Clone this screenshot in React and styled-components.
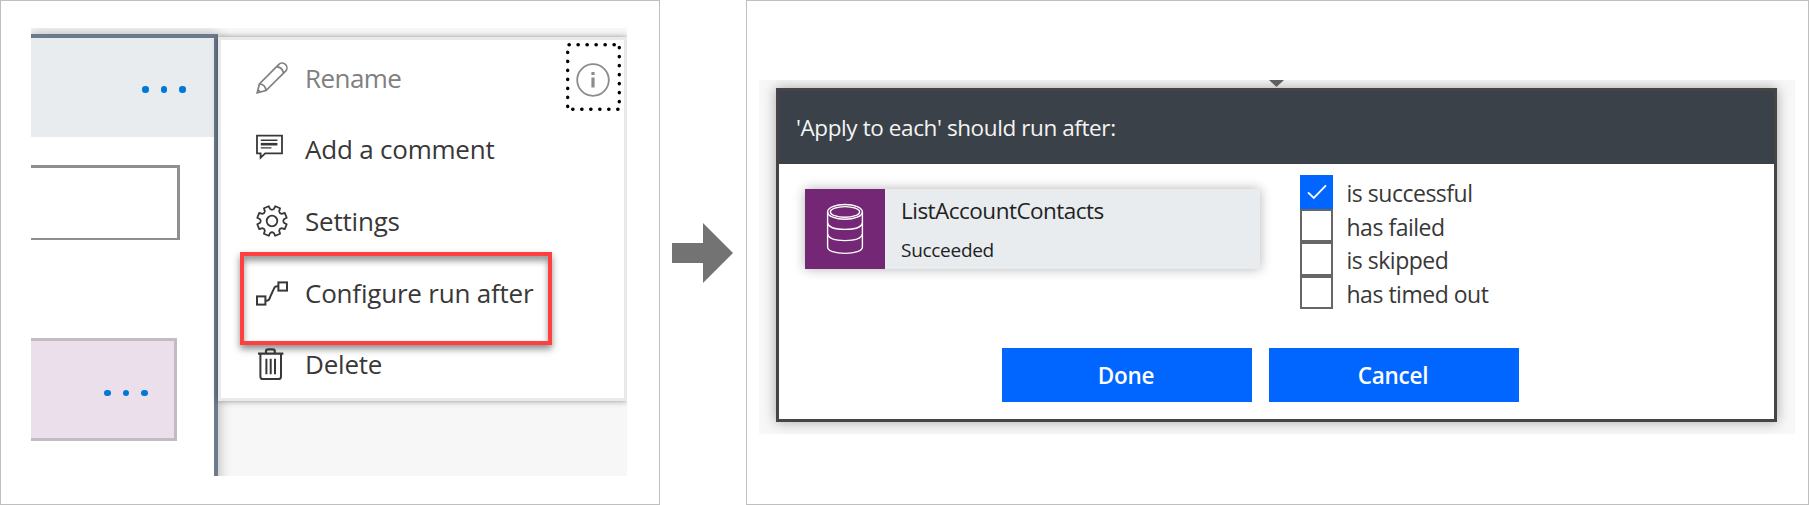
import React from "react";
import styled, { createGlobalStyle } from "styled-components";

const GlobalStyle = createGlobalStyle`
  * { box-sizing: border-box; }
  body { margin: 0; background: #fff; }
`;

const Page = styled.main`
  display: flex;
  align-items: center;
  width: 1809px;
  height: 505px;
  overflow: hidden;
  font-family: "Open Sans", "Noto Sans", sans-serif;
  letter-spacing: -0.018em;
  color: #383838;
  white-space: nowrap;
`;

const Frame = styled.section`
  width: ${(p) => p.$width}px;
  height: 505px;
  padding: ${(p) => p.$padding};
  border: 1px solid #bfbfbf;
`;

/* ---------- left: designer with the action menu ---------- */

const Designer = styled.div`
  display: flex;
  align-items: flex-start;
  width: 596px;
  height: 448px;
  overflow: hidden;
  background: #f7f7f7;
`;

const ScopeCard = styled.div`
  flex: none;
  width: 187px;
  height: 460px;
  margin-top: 6px;
  border: solid #6b7b8d;
  border-width: 4px 4px 0 0;
  background: #fff;
  box-shadow: 0 0 12px rgba(0, 0, 0, 0.3);
`;

const ScopeHeader = styled.div`
  display: flex;
  align-items: center;
  justify-content: flex-end;
  height: 99px;
  padding: 4px 28.5px 0 0;
  background: #e8ecef;
`;

const Dots = styled.div`
  display: flex;
  gap: 12px;
`;

const Dot = styled.i`
  width: 6.5px;
  height: 6.5px;
  border-radius: 50%;
  background: #0078d7;
`;

const InputBox = styled.div`
  width: 149px;
  height: 75px;
  margin-top: 28px;
  border: solid #8f8f8f;
  border-width: 3px 3px 2px 0;
`;

const NestedCard = styled.div`
  display: flex;
  align-items: center;
  justify-content: flex-end;
  width: 146px;
  height: 103px;
  margin-top: 98px;
  padding: 7px 26.5px 0 0;
  border: solid #c2bcc2;
  border-width: 3px 3px 3px 0;
  background: #ebdfeb;
`;

const Menu = styled.ul`
  position: relative;
  width: 409px;
  height: 364px;
  margin: 9px 0 0;
  padding: 1.8px 0 0 35px;
  list-style: none;
  border: 3px solid #e9e9e9;
  background: #fff;
  box-shadow: 0 0 6px rgba(0, 0, 0, 0.42);
`;

const MenuItem = styled.li`
  position: relative;
  display: flex;
  align-items: center;
  gap: 17px;
  height: 71.7px;
  font-size: 26px;
  letter-spacing: ${(p) => (p.$disabled ? "-0.022em" : "-0.008em")};
  color: ${(p) => (p.$disabled ? "#808080" : "#383838")};

  svg {
    flex: none;
    display: block;
    overflow: visible;
  }
`;

const Highlight = styled.span`
  position: absolute;
  left: -16px;
  top: -5px;
  width: 312px;
  height: 93px;
  border: 4px solid #ff4040;
  box-shadow: 0 4px 7px rgba(0, 0, 0, 0.45), inset 0 5px 6px rgba(0, 0, 0, 0.4);
`;

const InfoFocus = styled.span`
  position: absolute;
  right: 3px;
  top: 3px;
  display: flex;
  align-items: center;
  justify-content: center;
  width: 55px;
  height: 68px;
  padding: 6px 2px 0 0;
`;

const FocusRing = styled.svg`
  position: absolute;
  inset: 0;
`;

/* ---------- middle ---------- */

const Arrow = styled.svg`
  flex: none;
  margin: 0 13px 0 12px;
`;

/* ---------- right: run-after dialog ---------- */

const Stage = styled.div`
  width: 1036px;
  height: 354px;
  padding: 7.5px 0 0 17px;
  overflow: hidden;
  position: relative;
  background: #f7f7f7;
`;

const Pointer = styled.svg`
  position: absolute;
  left: 510px;
  top: 0;
`;

const Dialog = styled.div`
  width: 1001px;
  height: 334px;
  border: 3px solid #454545;
  background: #fff;
  box-shadow: 0 0 12px rgba(0, 0, 0, 0.33);
`;

const DialogTitle = styled.header`
  height: 73.5px;
  padding-left: 17px;
  line-height: 74px;
  font-size: 22.5px;
  letter-spacing: -0.018em;
  color: #f4f4f4;
  background: #3b4148;
`;

const DialogBody = styled.div`
  display: flex;
  align-items: flex-start;
  height: 184px;
  padding: 11px 0 0 26px;
`;

const ActionCard = styled.div`
  display: flex;
  width: 455px;
  height: 80px;
  margin-top: 13.5px;
  background: #e8ecef;
  box-shadow: 0 0 11px rgba(0, 0, 0, 0.3);
`;

const ActionIcon = styled.div`
  width: 80px;
  height: 80px;
  background: #742774;
`;

const ActionText = styled.div`
  display: flex;
  flex-direction: column;
  padding: 7px 0 0 16px;
  color: #222;
`;

const ActionName = styled.strong`
  font-weight: 400;
  font-size: 22.5px;
  line-height: 30px;
  letter-spacing: -0.023em;
`;

const ActionState = styled.span`
  margin-top: 10px;
  font-size: 19px;
  line-height: 28px;
`;

const Options = styled.div`
  margin-left: 40px;
`;

const Option = styled.label`
  display: flex;
  align-items: center;
  gap: 13.5px;
  height: 33.5px;
  font-size: 23px;
  letter-spacing: -0.021em;
`;

const OptionText = styled.span`
  padding-top: 2.5px;
`;

const Check = styled.span`
  display: flex;
  align-items: center;
  justify-content: center;
  width: 33px;
  height: 33.5px;
  border: 2px solid ${(p) => (p.$on ? "#0066ff" : "#666")};
  background: ${(p) => (p.$on ? "#0066ff" : "#fff")};
`;

const Actions = styled.footer`
  display: flex;
  gap: 17px;
  padding-left: 222.5px;
`;

const Button = styled.button`
  width: 250px;
  height: 53.5px;
  padding: 0.5px 1px 0 0;
  border: 0;
  font: 600 22.5px "Open Sans", "Noto Sans", sans-serif;
  letter-spacing: -0.012em;
  color: #fff;
  background: #0066ff;
`;

/* ---------- icons ---------- */

const Icon = ({ children, width = 1.8 }) => (
  <svg width="32" height="32" viewBox="0 0 32 32" fill="none" stroke="currentColor" strokeWidth={width}>
    {children}
  </svg>
);

const PencilIcon = () => (
  <Icon width={1.7}>
    <path d="M1.2 30.8 3.4 22 22.6 2.6A4.7 4.7 0 0 1 29.6 9.2L10 28.6Z" />
    <path d="M3.4 22C7 22.2 9.6 24.8 10 28.6M20.8 4.6C24.4 5.2 27 7.8 27.6 11.2M1.6 27.6 4.4 30.2" />
  </Icon>
);

const CommentIcon = () => (
  <Icon>
    <path d="M1 2.6H26V20.4H9.2L4.6 24.6V20.4H1Z" />
    <path d="M4.8 7.2H21.4M4.8 14.9H15.4" strokeWidth="1.4" />
    <path d="M4.8 11.2H21.4" strokeWidth="2.6" />
  </Icon>
);

const point = (radius, degrees) => {
  const a = (degrees * Math.PI) / 180;
  return `${(16 + radius * Math.sin(a)).toFixed(2)} ${(16 - radius * Math.cos(a)).toFixed(2)}`;
};

const gearOutline =
  Array.from({ length: 8 }, (_, i) => {
    const c = 22.5 + i * 45;
    return `${i ? "L" : "M"}${point(12, c - 14)} L${point(15.1, c - 10)} L${point(15.1, c + 10)} L${point(12, c + 14)} Q${point(10.6, c + 22.5)} ${point(12, c + 31)}`;
  }).join(" ") + "Z";

const GearIcon = () => (
  <Icon>
    <path d={gearOutline} strokeLinejoin="round" />
    <circle cx="16" cy="16" r="5.3" />
  </Icon>
);

const RunAfterIcon = () => (
  <Icon width={2}>
    <rect x="1" y="19.4" width="8.4" height="8.2" />
    <rect x="22.4" y="5.4" width="8.6" height="8.2" />
    <path d="M9.8 23.8C13 24 13.2 22.4 14.4 19.4L17.6 12.4C18.8 9.6 19.2 9 22 9.2" />
  </Icon>
);

const TrashIcon = () => (
  <Icon width={2}>
    <path d="M2 5.6H27.4M10 5V3.4Q10 1.4 12 1.4H16.8Q18.8 1.4 18.8 3.4V5" strokeWidth="2.2" />
    <path d="M4.4 6V28.4Q4.4 31 7 31H22.4Q25 31 25 28.4V6" />
    <path d="M10.4 10.8V26.2M14.7 10.8V26.2M19 10.8V26.2" />
  </Icon>
);

const DatabaseIcon = () => (
  <svg width="80" height="80" viewBox="0 0 80 80" fill="none" stroke="#fff" strokeWidth="1.4">
    <ellipse cx="40" cy="22.9" rx="17.4" ry="7.4" />
    <ellipse cx="40" cy="22.9" rx="14.6" ry="5.3" />
    <path d="M22.6 23V58C22.6 62 30 64.4 40 64.4S57.4 62 57.4 58V23" />
    <path d="M22.6 34C23.6 38 30 40.4 40 40.4S56.4 38 57.4 34M22.6 45.2C23.6 49.2 30 51.6 40 51.6S56.4 49.2 57.4 45.2" />
  </svg>
);

const InfoIcon = () => (
  <svg width="34" height="34" viewBox="0 0 34 34" fill="none" stroke="#8c8c8c">
    <circle cx="17" cy="17" r="15.8" strokeWidth="1.8" />
    <path d="M17 14.5V24.5" strokeWidth="3.2" />
    <path d="M17 9V12" strokeWidth="3.2" />
  </svg>
);

const MENU = [
  { label: "Rename", icon: PencilIcon, disabled: true },
  { label: "Add a comment", icon: CommentIcon },
  { label: "Settings", icon: GearIcon },
  { label: "Configure run after", icon: RunAfterIcon, highlighted: true },
  { label: "Delete", icon: TrashIcon },
];

const OPTIONS = [
  { label: "is successful", on: true },
  { label: "has failed" },
  { label: "is skipped" },
  { label: "has timed out" },
];

const MoreDots = () => (
  <Dots>
    <Dot />
    <Dot />
    <Dot />
  </Dots>
);

export default function App() {
  return (
    <>
      <GlobalStyle />
      <Page>
        <Frame $width={660} $padding="27px 0 0 30px">
          <Designer>
            <ScopeCard>
              <ScopeHeader>
                <MoreDots />
              </ScopeHeader>
              <InputBox />
              <NestedCard>
                <MoreDots />
              </NestedCard>
            </ScopeCard>
            <Menu>
              {MENU.map(({ label, icon: Glyph, disabled, highlighted }) => (
                <MenuItem key={label} $disabled={disabled}>
                  <Glyph />
                  {label}
                  {highlighted && <Highlight />}
                </MenuItem>
              ))}
              <InfoFocus>
                <FocusRing width="55" height="68" viewBox="0 0 55 68" fill="none" stroke="#000" strokeWidth="3.4" strokeLinecap="round" strokeDasharray="0.3 8.7">
                  <path d="M3 1.7H50M53.3 4.5V62M52 66.2H5M1.7 63.5V8" />
                </FocusRing>
                <InfoIcon />
              </InfoFocus>
            </Menu>
          </Designer>
        </Frame>

        <Arrow width="61" height="60" viewBox="0 0 61 60">
          <path d="M0 20H31V0L61 30 31 60V40H0Z" fill="#737373" />
        </Arrow>

        <Frame $width={1063} $padding="79px 0 0 12px">
          <Stage>
            <Dialog>
              <DialogTitle>'Apply to each' should run after:</DialogTitle>
              <DialogBody>
                <ActionCard>
                  <ActionIcon>
                    <DatabaseIcon />
                  </ActionIcon>
                  <ActionText>
                    <ActionName>ListAccountContacts</ActionName>
                    <ActionState>Succeeded</ActionState>
                  </ActionText>
                </ActionCard>
                <Options>
                  {OPTIONS.map(({ label, on }) => (
                    <Option key={label}>
                      <Check $on={on}>
                        {on && (
                          <svg width="20" height="16" viewBox="0 0 20 16" fill="none" stroke="#fff" strokeWidth="1.8">
                            <path d="M1 8.4 6.8 14 19 1.4" />
                          </svg>
                        )}
                      </Check>
                      <OptionText>{label}</OptionText>
                    </Option>
                  ))}
                </Options>
              </DialogBody>
              <Actions>
                <Button>Done</Button>
                <Button>Cancel</Button>
              </Actions>
            </Dialog>
            <Pointer width="15" height="7" viewBox="0 0 15 7">
              <path d="M0 0H15L7.5 7Z" fill="#606060" />
            </Pointer>
          </Stage>
        </Frame>
      </Page>
    </>
  );
}
